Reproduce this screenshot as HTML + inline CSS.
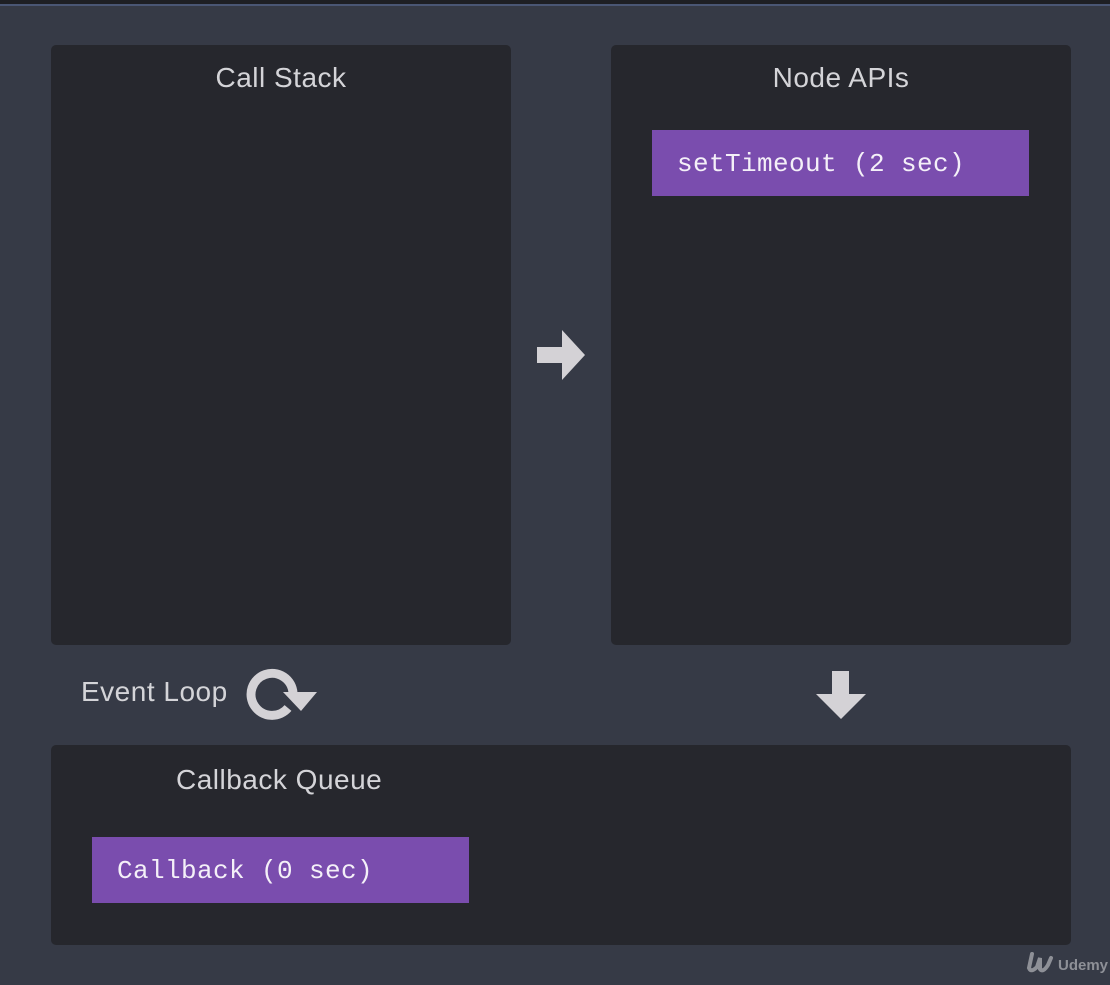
<!DOCTYPE html><html><head><style>
body{margin:0;width:1110px;height:985px;background:#363a46;position:relative;overflow:hidden;font-family:"Liberation Sans",sans-serif}
.top{position:absolute;left:0;top:0;width:1110px;height:4px;background:#1e1f24}
.line{position:absolute;left:0;top:4px;width:1110px;height:2px;background:#4a5674}
.p{position:absolute;background:#26272d;border-radius:5px}
.t{position:absolute;color:#d4d4d8;font-size:28px;letter-spacing:0.5px;white-space:nowrap}
.b{position:absolute;background:#7a4dae;color:#f4f0f8;font-family:"Liberation Mono",monospace;font-size:26px;letter-spacing:0.4px;line-height:66px;padding-top:1px;box-sizing:border-box}
</style></head><body>
<div class="top"></div><div class="line"></div>
<div class="p" style="left:51px;top:45px;width:460px;height:600px"></div>
<div class="p" style="left:611px;top:45px;width:460px;height:600px"></div>
<div class="p" style="left:51px;top:745px;width:1020px;height:200px"></div>
<div class="t" style="left:51px;width:460px;text-align:center;top:62px">Call Stack</div>
<div class="t" style="left:611px;width:460px;text-align:center;top:62px">Node APIs</div>
<div class="t" style="left:176px;top:764px">Callback Queue</div>
<div class="t" style="left:81px;top:676px">Event Loop</div>
<div class="b" style="left:652px;top:130px;width:377px;height:66px;padding-left:25px">setTimeout (2 sec)</div>
<div class="b" style="left:92px;top:837px;width:377px;height:66px;padding-left:25px">Callback (0 sec)</div>
<svg style="position:absolute;left:0;top:0" width="1110" height="985">
<polygon points="537,347 562,347 562,330 585,355 562,380 562,363 537,363" fill="#d4d2d6"/>
<polygon points="832,671 849,671 849,694 866,694 841,719 816,694 832,694" fill="#d4d2d6"/>
<path d="M288,708 A21,21 0 1 1 293,693" fill="none" stroke="#d4d2d6" stroke-width="9"/>
<polygon points="283,692 317,692 301,711" fill="#d4d2d6"/>
<text x="1058" y="970" fill="#8e9097" font-family="Liberation Sans" font-weight="bold" font-size="15">Udemy</text>
<path d="M1032,954 L1029,968 Q1031,973 1037,967 L1040,958 L1040,969 Q1043,973 1048,965 L1051,958" fill="none" stroke="#8e9097" stroke-width="4" stroke-linecap="round"/>
</svg>
</body></html>
